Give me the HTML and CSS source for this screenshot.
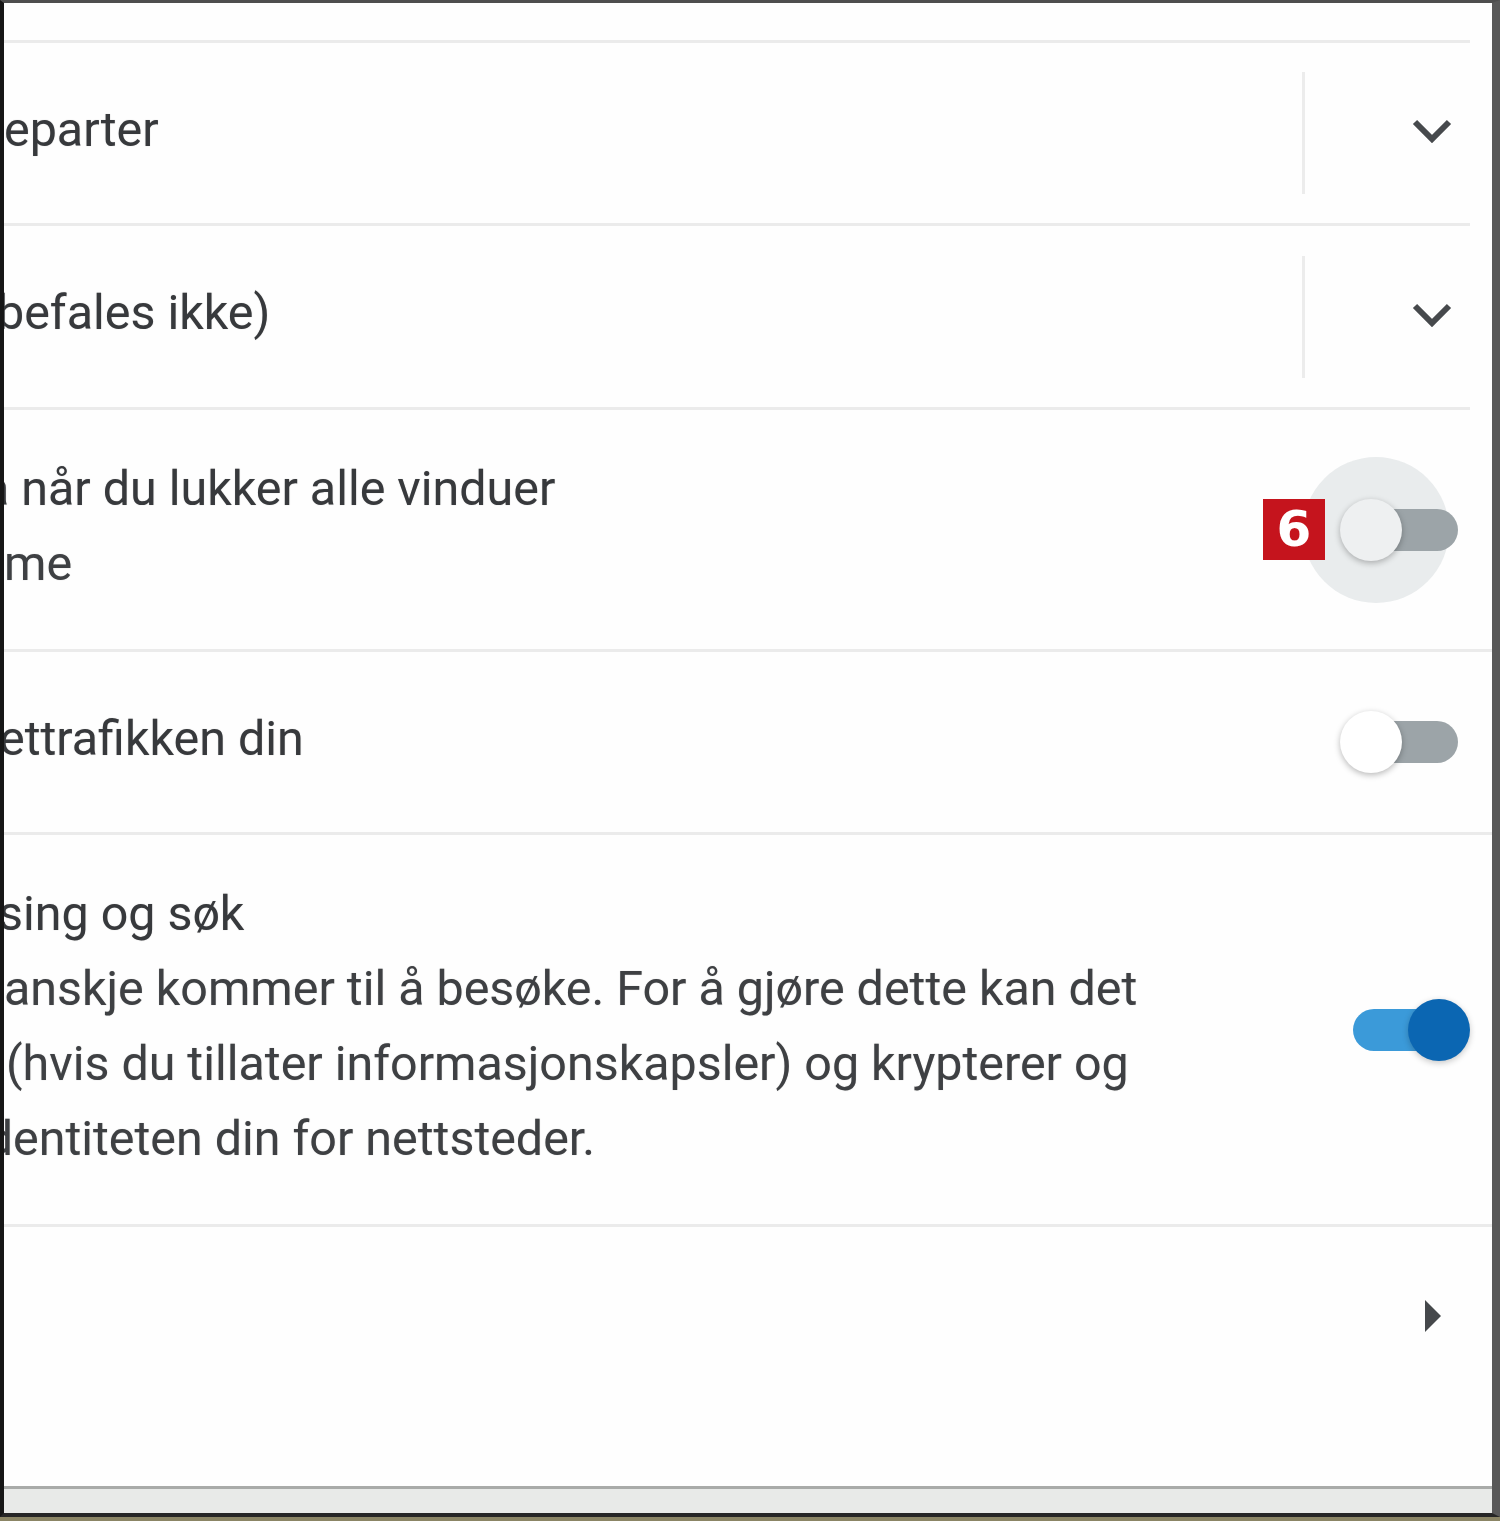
FILE: index.html
```html
<!DOCTYPE html>
<html lang="no">
<head>
<meta charset="utf-8">
<title>Innstillinger</title>
<link rel="stylesheet" href="styles.css">
</head>
<body>
<div class="window">
  <div class="content">
    <div class="top narrow"></div>

    <div class="row narrow select-row">
      <div class="label"><span class="line">eparter</span></div>
      <div class="vsep"></div>
      <svg class="chev" width="40" height="24" viewBox="0 0 40 24"><path d="M3 3 L20 20 L37 3" fill="none" stroke="#46494c" stroke-width="6"/></svg>
    </div>

    <div class="row narrow select-row tall2">
      <div class="label"><span class="line cut-b">befales ikke)</span></div>
      <div class="vsep"></div>
      <svg class="chev" width="40" height="24" viewBox="0 0 40 24"><path d="M3 3 L20 20 L37 3" fill="none" stroke="#46494c" stroke-width="6"/></svg>
    </div>

    <div class="row toggle-row two-line">
      <div class="label">
        <span class="line cut-a">a når du lukker alle vinduer</span>
        <span class="line sub">me</span>
      </div>
      <div class="toggle off hover">
        <div class="ripple"></div>
        <div class="track"></div>
        <div class="knob"></div>
        <div class="badge">6</div>
      </div>
    </div>

    <div class="row toggle-row">
      <div class="label"><span class="line cut-e">ettrafikken din</span></div>
      <div class="toggle off">
        <div class="track"></div>
        <div class="knob"></div>
      </div>
    </div>

    <div class="row toggle-row four-line">
      <div class="label">
        <span class="line cut-s">sing og søk</span>
        <span class="line sub">anskje kommer til å besøke. For å gjøre dette kan det</span>
        <span class="line sub cut-p">(hvis du tillater informasjonskapsler) og krypterer og</span>
        <span class="line sub cut-d">identiteten din for nettsteder.</span>
      </div>
      <div class="toggle on">
        <div class="track"></div>
        <div class="knob"></div>
      </div>
    </div>

    <div class="row link-row">
      <div class="label"></div>
      <svg class="arrow" width="20" height="36" viewBox="0 0 20 36"><polygon points="3,2 19,18 3,34" fill="#45484b"/></svg>
    </div>

    <div class="filler"></div>
  </div>
  <div class="status"></div>
</div>
</body>
</html>
```

FILE: styles.css
```css
html, body {
  margin: 0;
  padding: 0;
}

body {
  width: 1500px;
  height: 1521px;
  overflow: hidden;
  background: #8b8565;
  font-family: Roboto, "Noto Sans", "Liberation Sans", sans-serif;
}

.window {
  box-sizing: border-box;
  width: 1500px;
  height: 1517px;
  border-top: 3px solid #4e4e4e;
  border-left: 4px solid #161616;
  border-right: 8px solid #585858;
  border-bottom: 4px solid #262626;
  background: #ffffff;
  display: flex;
  flex-direction: column;
}

.content {
  flex: 1;
  display: flex;
  flex-direction: column;
  overflow: hidden;
  background: #fefefe;
}

.top {
  height: 37px;
  flex: none;
  border-bottom: 3px solid #ebebeb;
}

.narrow {
  margin-right: 22px;
}

.row {
  flex: none;
  display: flex;
  align-items: center;
  min-height: 180px;
  border-bottom: 3px solid #ebebeb;
  box-sizing: border-box;
}

.select-row {
  height: 183px;
  padding-right: 18px;
}

.select-row.tall2 {
  height: 184px;
}

.toggle-row {
  height: 183px;
  padding-right: 22px;
}

.toggle-row.two-line {
  height: 242px;
}

.toggle-row.four-line {
  height: 392px;
}

.link-row {
  height: 182px;
  border-bottom: none;
  padding-right: 50px;
}

.filler {
  flex: 1;
}

.label {
  flex: 1;
  min-width: 0;
  display: flex;
  flex-direction: column;
  white-space: nowrap;
  margin-bottom: 8px;
}

.line {
  display: block;
  font-size: 48.4px;
  line-height: 75px;
  color: #37393c;
  text-shadow: 0 0 1px rgba(60, 60, 60, 0.35);
}

.line.sub {
  color: #3e4043;
}

.cut-b { margin-left: -7px; }
.cut-a { margin-left: -21px; }
.cut-e { margin-left: -5px; }
.cut-s { margin-left: -6px; }
.cut-p { margin-left: 2px; }
.cut-d { margin-left: -30px; }

.vsep {
  width: 3px;
  height: 122px;
  background: #ececec;
  margin-right: 107px;
  flex: none;
}

.chev {
  flex: none;
  display: block;
  margin-bottom: 4px;
}

.arrow {
  flex: none;
  display: block;
  margin-bottom: 4px;
}

/* toggles */
.toggle {
  position: relative;
  width: 130px;
  height: 62px;
  flex: none;
}

.track {
  position: absolute;
  left: 13px;
  top: 10px;
  width: 105px;
  height: 42px;
  border-radius: 21px;
  background: #9ca4a8;
}

.knob {
  position: absolute;
  top: 0;
  left: 0;
  width: 62px;
  height: 62px;
  border-radius: 50%;
  background: #ffffff;
  box-shadow: 0 2px 6px rgba(0, 0, 0, 0.28);
}

.toggle.on .track {
  background: #3b9ad9;
}

.toggle.on .knob {
  left: 68px;
  background: #0b66b2;
  box-shadow: 0 2px 6px rgba(0, 0, 0, 0.22);
}

.toggle.hover .knob {
  background: #eef0f1;
}

.ripple {
  position: absolute;
  left: -37px;
  top: -42px;
  width: 146px;
  height: 146px;
  border-radius: 50%;
  background: #e9eced;
}

.badge {
  position: absolute;
  left: -77px;
  top: 0;
  width: 62px;
  height: 61px;
  background: #c5141d;
  color: #ffffff;
  font-family: "DejaVu Sans", "Liberation Sans", sans-serif;
  font-weight: 700;
  font-size: 50px;
  line-height: 61px;
  text-align: center;
}

.status {
  flex: none;
  height: 24px;
  border-top: 3px solid #a9aba9;
  background: #e8eae8;
}
```
